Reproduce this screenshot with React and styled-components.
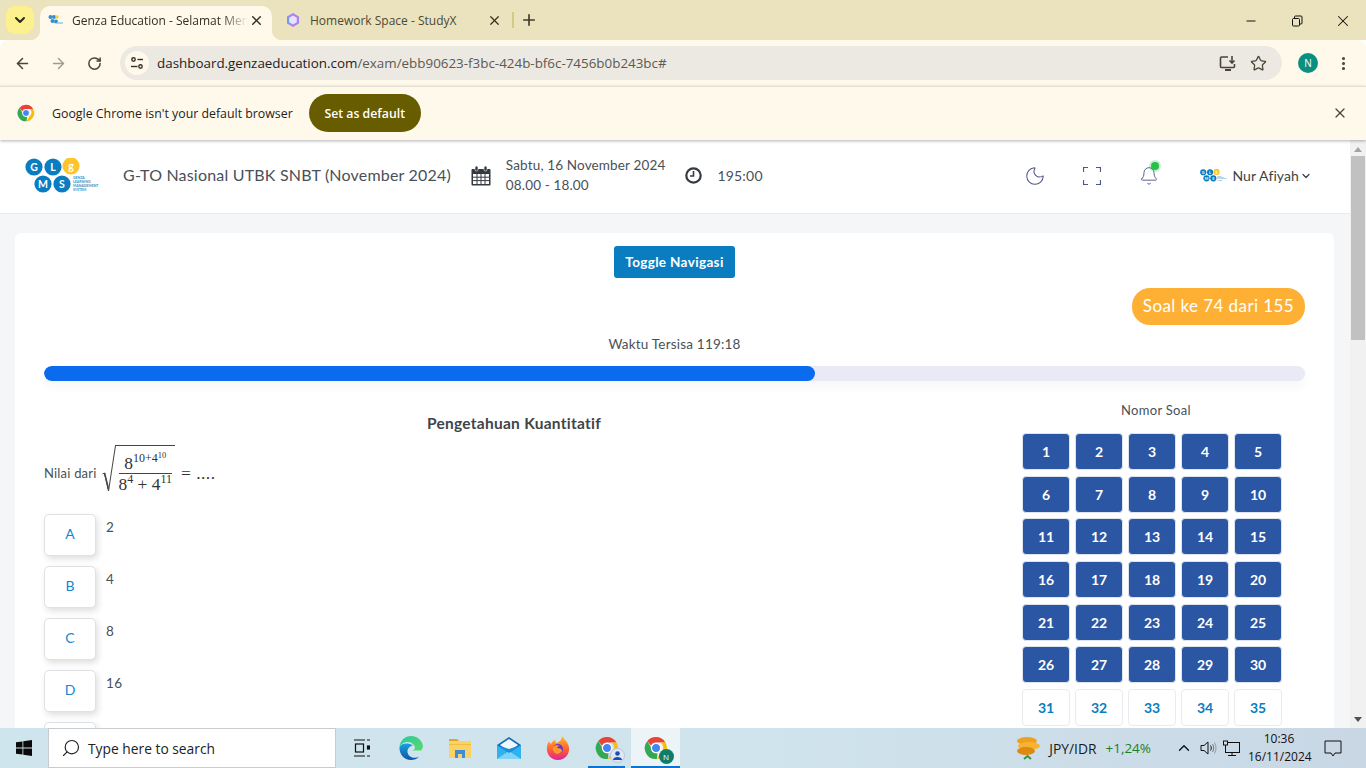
import React from "react";
import styled, { createGlobalStyle } from "styled-components";
import { ArrowLeft, ArrowRight, RotateCw, Star, X, Plus, Minus, ChevronDown, ChevronUp, EllipsisVertical, Moon, Bell, Search } from "lucide-react";

const Global = createGlobalStyle`
  html, body { margin: 0; padding: 0; height: 100%; overflow: hidden; background: #fff; }
  #root { height: 768px; }
  * { box-sizing: border-box; }
`;
const UI = `"Open Sans", "Noto Sans", sans-serif`;
const PAGE = `Lato, "Noto Sans", sans-serif`;

const Shell = styled.div`display:flex;flex-direction:column;width:1366px;height:768px;overflow:hidden;font-family:${UI};`;

/* browser chrome */
const TabStrip = styled.div`height:40px;background:#ebe3bd;display:flex;align-items:flex-end;padding-left:6px;position:relative;flex:none;`;
const TabMenu = styled.button`width:28px;height:28px;border:0;padding:0;margin:0 6px 6px 0;border-radius:9px;background:#fdf08f;display:flex;align-items:center;justify-content:center;color:#2a2a1a;`;
const ActiveTab = styled.div`width:232px;height:34px;background:#fff9ec;border-radius:10px 10px 0 0;display:flex;align-items:center;padding:0 8px 6px 8px;font-size:12px;color:#30301f;position:relative;
  &::before,&::after{content:"";position:absolute;bottom:0;width:10px;height:10px;background:radial-gradient(circle at var(--c) 0,#ebe3bd 10px,#fff9ec 10.5px);}
  &::before{left:-10px;--c:0;}
  &::after{right:-10px;--c:100%;}`;
const TabIcon = styled.span`width:16px;height:16px;flex:none;margin-right:8px;display:flex;align-items:center;justify-content:center;`;
const TabTitle = styled.span`flex:1;white-space:nowrap;overflow:hidden;font-size:12px;${p => !p.$full && "-webkit-mask-image:linear-gradient(90deg,#000 85%,transparent);mask-image:linear-gradient(90deg,#000 85%,transparent);"}${p => p.$full && "margin-left:1px;"}`;
const InactiveTab = styled(ActiveTab)`background:transparent;width:238px;padding-left:13px;color:#4b4936;&::before,&::after{display:none;}`;
const TabClose = styled.span`display:flex;width:16px;height:16px;align-items:center;justify-content:center;color:#33331f;flex:none;`;
const TabDivider = styled.span`width:2px;height:16px;background:#d6c984;margin:0 0 12px 2px;flex:none;`;
const NewTab = styled.span`display:flex;margin:0 0 11px 6px;color:#3f3c2a;`;
const WindowControls = styled.div`margin-left:auto;display:flex;height:40px;align-self:flex-start;align-items:center;color:#111;`;
const WindowButton = styled.span`width:46px;height:40px;display:flex;align-items:center;justify-content:center;padding-top:1px;`;

const Toolbar = styled.div`height:46px;flex:none;background:#fff9ec;border-radius:8px 8px 0 0;display:flex;align-items:center;padding:0 10px 0 10px;color:#4a4637;`;
const NavButton = styled.span`width:24px;height:24px;margin-right:12px;display:flex;align-items:center;justify-content:center;color:${p => p.$dim ? "#a09c8a" : "#4a4637"};`;
const Omnibox = styled.div`width:1162px;height:34px;margin-left:2px;border-radius:17px;background:#ece9e2;display:flex;align-items:center;padding:0 15px 0 5px;`;
const SiteInfo = styled.span`width:24px;height:24px;border-radius:50%;background:#fff9ec;display:flex;align-items:center;justify-content:center;margin-right:8px;`;
const Url = styled.span`font-size:13.4px;color:#5c5a52;flex:1;white-space:nowrap;b{font-weight:400;color:#23221c;}`;
const OmniIcon = styled.span`display:flex;margin-left:13px;color:#4a4637;`;
const Avatar = styled.span`width:20px;height:20px;border-radius:50%;background:#0b8f7f;color:#fff;font-size:10px;display:flex;align-items:center;justify-content:center;margin-left:16px;flex:none;`;
const BadgeAvatar = styled(Avatar)`position:absolute;right:-6px;bottom:-4px;width:15px;height:15px;margin:0;font-size:8px;background:#0d7d6c;`;
const Kebab = styled.span`display:flex;margin-left:17px;color:#4a4637;`;

const Infobar = styled.div`height:54px;flex:none;background:#fff9ec;border-top:1px solid #e6e0d2;display:flex;align-items:center;padding:0 17px 1px;position:relative;z-index:2;box-shadow:0 1px 3px rgba(0,0,0,.3);`;
const InfoText = styled.span`font-size:12.35px;color:#23221c;margin-left:17px;`;
const SetDefault = styled.button`height:38px;width:112px;margin-left:16px;border:0;border-radius:19px;background:#675c00;color:#fff;font:600 12.3px ${UI};`;
const InfoClose = styled.span`margin-left:auto;display:flex;color:#4a4637;margin-right:1px;`;

/* page */
const Viewport = styled.div`flex:1;min-height:0;display:flex;`;
const Page = styled.div`width:1350px;overflow:hidden;background:#f5f6f8;font-family:${PAGE};color:#495057;`;
const Header = styled.header`height:74px;background:#fff;border-bottom:1px solid #e9ebef;display:flex;align-items:center;padding:0 0 2px 25px;`;
const Title = styled.div`font-size:16px;margin-left:22px;padding-bottom:2px;color:#495057;letter-spacing:.19px;white-space:nowrap;`;
const IconSlot = styled.span`display:flex;margin-left:${p => p.$ml || 0}px;color:#343a40;`;
const DateBox = styled.div`margin-left:15px;padding-bottom:2px;font-size:13.5px;line-height:20px;letter-spacing:.15px;white-space:nowrap;`;
const Duration = styled.span`font-size:14px;margin-left:15px;letter-spacing:.2px;`;
const HeaderRight = styled.div`margin-left:auto;display:flex;align-items:center;color:#4f5586;padding-right:38px;`;
const HeaderIcon = styled.span`display:flex;width:22px;justify-content:center;margin-right:${p => p.$mr ?? 35}px;position:relative;`;
const Dot = styled.span`position:absolute;top:-4px;right:1px;width:8px;height:8px;border-radius:50%;background:#25c14a;box-shadow:0 0 0 2px rgba(37,193,74,.25);`;
const UserName = styled.span`font-size:14px;color:#3d4247;margin-left:5px;letter-spacing:.1px;white-space:nowrap;`;
const UserChevron = styled.span`display:flex;color:#3d4247;margin-left:1px;`;

const Main = styled.main`padding:19px 16px 0 15px;`;
const Card = styled.section`background:#fff;border-radius:6px;padding:13px 29px 0 29px;height:900px;`;
const CenterRow = styled.div`display:flex;justify-content:center;`;
const ToggleNav = styled.button`width:121px;height:32px;border:0;border-radius:3px;background:#0a7dc1;color:#fff;font:700 13.5px ${PAGE};letter-spacing:.35px;padding:0;`;
const RightRow = styled.div`display:flex;justify-content:flex-end;margin-top:10px;`;
const Badge = styled.span`width:173px;height:37px;border-radius:18px;background:#fdb033;color:#fff;font-size:17px;letter-spacing:.42px;display:flex;align-items:center;justify-content:center;padding-bottom:2px;white-space:nowrap;`;
const Remaining = styled.div`text-align:center;font-size:13.5px;margin-top:10px;line-height:18px;letter-spacing:.2px;`;
const Track = styled.div`height:15px;margin-top:13px;border-radius:8px;background:#e9eaf5;box-shadow:0 6px 10px rgba(60,60,100,.04);overflow:hidden;`;
const Fill = styled.div`height:100%;background:#0b6bef;border-radius:8px;`;
const Columns = styled.div`display:flex;margin-top:20px;`;
const Left = styled.div`width:940px;flex:none;padding-top:12px;`;
const SectionTitle = styled.h2`margin:0;text-align:center;font:700 15.5px/20px ${PAGE};color:#40454a;letter-spacing:.27px;`;
const Question = styled.div`display:flex;align-items:center;font-size:13px;margin-top:5px;height:70px;letter-spacing:.2px;`;
const Formula = styled.span`display:inline-flex;align-items:center;font-family:"Liberation Serif",serif;color:#333;font-size:17.4px;letter-spacing:0;margin-left:5px;`;
const Radical = styled.span`display:inline-flex;align-items:flex-start;margin-bottom:8px;`;
const Frac = styled.span`display:inline-flex;flex-direction:column;align-items:center;border-top:1px solid #444;padding:0 0 0 2px;margin-left:-1px;`;
const FracInner = styled.span`display:inline-flex;flex-direction:column;align-items:center;margin:0 3px 0 2px;`;
const Num = styled.span`padding:7px 0 0;line-height:20px;border-bottom:1px solid #444;white-space:nowrap;width:100%;text-align:center;`;
const Den = styled.span`padding-top:1px;line-height:18px;white-space:nowrap;`;
const Sup = styled.sup`font-size:12px;line-height:0;vertical-align:7px;`;
const Sup2 = styled.sup`font-size:8.5px;line-height:0;vertical-align:4px;`;
const Equals = styled.span`margin:0 0 0 6px;white-space:nowrap;letter-spacing:.5px;`;
const Options = styled.div`display:flex;flex-direction:column;gap:10px;margin-top:6px;`;
const Option = styled.div`display:flex;align-items:flex-start;`;
const OptionKey = styled.button`width:52px;height:42px;flex:none;border:1px solid #dfe1e6;border-radius:5px;background:#fff;color:#1387cf;font:400 14px ${PAGE};box-shadow:2px 3px 6px rgba(0,0,0,.13);padding:0 0 3px;`;
const OptionText = styled.span`font-size:13.5px;margin:4px 0 0 10px;line-height:18px;color:#495057;letter-spacing:.3px;`;
const Right = styled.div`flex:none;width:267px;margin-left:35px;`;
const NavTitle = styled.div`text-align:center;font-size:13px;line-height:18px;letter-spacing:.3px;width:274px;`;
const QGrid = styled.div`display:grid;grid-template-columns:repeat(5,48px);column-gap:5px;row-gap:5.7px;margin-top:14px;margin-left:3px;`;
const QCell = styled.button`height:37px;padding:0;border-radius:4px;border:1px solid ${p => p.$done ? "#dde3ef" : "#e9ebef"};background:${p => p.$done ? "#2b56a3" : "#fff"};color:${p => p.$done ? "#fff" : "#0a7dc1"};font:700 14px ${PAGE};`;

/* scrollbar */
const Scrollbar = styled.div`width:16px;background:#f1f1f1;display:flex;flex-direction:column;align-items:center;justify-content:space-between;position:relative;`;
const Arrow = styled.span`width:0;height:0;margin:${p => p.$down ? "0 0 6px" : "7px 0 0"};border-left:4.5px solid transparent;border-right:4.5px solid transparent;${p => p.$down ? "border-top:5px solid #505050;" : "border-bottom:5px solid #a3a3a3;"}`;
const Thumb = styled.span`position:absolute;top:16px;left:1px;width:14px;height:184px;background:#c1c1c1;`;

/* taskbar */
const Taskbar = styled.footer`height:40px;flex:none;background:linear-gradient(90deg,#cfe5ee 0%,#cfe3ec 60%,#c9d7e5 100%);display:flex;align-items:center;color:#111;font-family:${UI};`;
const StartBtn = styled.span`width:48px;display:flex;justify-content:center;`;
const SearchBox = styled.div`width:288px;height:40px;background:#fff;border:1px solid #c6ccd0;display:flex;align-items:center;padding-left:12px;font-size:13.8px;color:#222;gap:7px;`;
const TaskIcon = styled.span`width:49px;height:40px;flex:none;display:flex;align-items:center;justify-content:center;position:relative;margin-left:${p => p.$ml || 0}px;background:${p => p.$active ? "#ecf4f8" : "transparent"};
  ${p => p.$running && `&::after{content:"";position:absolute;left:${p.$active ? 0 : "6px"};right:${p.$active ? 0 : "6px"};bottom:0;height:2px;background:#0a74d1;}`}`;
const TaskBadgeWrap = styled.span`position:relative;display:flex;`;
const PersonBadge = styled.svg`position:absolute;right:-6px;bottom:-3px;`;
const Tray = styled.div`margin-left:auto;display:flex;align-items:center;height:40px;font-size:12px;`;
const Pair = styled.span`margin-left:9px;font-size:13.8px;color:#1a1a1a;`;
const Change = styled.span`margin-left:9px;font-size:13.5px;color:#1a7f26;margin-right:24px;`;
const TrayIcon = styled.span`display:flex;margin-right:${p => p.$mr ?? 4}px;`;
const Clock = styled.div`width:62px;text-align:center;font-size:12px;line-height:18px;color:#111;margin-left:8px;white-space:nowrap;`;
const Notify = styled.span`display:flex;margin:0 0 0 14px;width:42px;`;

const ChromeLogo = ({ size = 18 }) => (
  <svg width={size} height={size} viewBox="0 0 24 24">
    <path d="M12 1a11 11 0 0 1 9.500 5.500H12a5.500 5.500 0 0 0-5 3.200L3.300 5A11 11 0 0 1 12 1z" fill="#ea4335" />
    <path d="M21.500 6.500A11 11 0 0 1 12.800 23l4-7a5.500 5.500 0 0 0-.6-9.500z" fill="#fbbc04" />
    <path d="M12.800 23A11 11 0 0 1 3.300 5L7.400 12a5.500 5.500 0 0 0 6.100 5.300z" fill="#34a853" />
    <circle cx="12" cy="12" r="4.600" fill="#4285f4" stroke="#fff" strokeWidth="1.200" />
  </svg>
);

const GlmsLogo = ({ scale = 1 }) => (
  <svg width={76 * scale} height={36 * scale} viewBox="0 0 76 36" style={{ flex: "none" }}>
    {[["G", 9, 9, "#0a7dc1"], ["L", 28, 9, "#0a7dc1"], ["g", 46, 8, "#fdc52c"], ["M", 18, 26, "#0a7dc1"], ["S", 37, 26, "#0a7dc1"]].map(([t, x, y, c]) => (
      <g key={t}>
        <circle cx={x} cy={y} r="8.600" fill={c} />
        <text x={x} y={y + 3.6} textAnchor="middle" fontSize="10.500" fontWeight="700" fontFamily="Lato,sans-serif" fill="#fff">{t}</text>
      </g>
    ))}
    <text fontSize="3.500" fontFamily="Lato,sans-serif" fill="#3b8fc7" fontWeight="700">
      <tspan x="48" y="21">GENZA</tspan><tspan x="48" y="25">LEARNING</tspan><tspan x="48" y="29">MANAGEMENT</tspan><tspan x="48" y="33">SYSTEM</tspan>
    </text>
  </svg>
);

const MiniFavicon = () => (
  <svg width="16" height="12" viewBox="0 0 16 12">
    <circle cx="2.500" cy="3" r="2" fill="#2f8fd0" /><circle cx="6" cy="3" r="2" fill="#2f8fd0" /><circle cx="9" cy="3" r="1.800" fill="#f5cf4a" />
    <circle cx="4.500" cy="7" r="2" fill="#2f8fd0" /><circle cx="8" cy="7.500" r="2" fill="#2f8fd0" /><path d="M9 8h6v2H9z" fill="#a8d4ee" />
  </svg>
);

const TOTAL = Array.from({ length: 155 }, (_, i) => i + 1);

export default function App() {
  return (
    <Shell>
      <Global />
      <TabStrip>
        <TabMenu><ChevronDown size={16} strokeWidth={3} /></TabMenu>
        <ActiveTab>
          <TabIcon><MiniFavicon /></TabIcon>
          <TabTitle>Genza Education - Selamat Menempuh</TabTitle>
          <TabClose><X size={15} strokeWidth={2.4} /></TabClose>
        </ActiveTab>
        <InactiveTab>
          <TabIcon>
            <svg width="16" height="16" viewBox="0 0 16 16">
              <path d="M8 1l6 3.400v7.200L8 15l-6-3.400V4.400z" fill="#a884f0" />
              <path d="M8 3.500l3.800 2.200v4.600L8 12.500l-3.800-2.200V5.700z" fill="#e9e3fb" />
              <path d="M2 4.400L4 5.700v4.600l-2 1.300z" fill="#5aa7ef" />
            </svg>
          </TabIcon>
          <TabTitle $full>Homework Space - StudyX</TabTitle>
          <TabClose><X size={15} strokeWidth={2} /></TabClose>
        </InactiveTab>
        <TabDivider />
        <NewTab><Plus size={18} strokeWidth={2.2} /></NewTab>
        <WindowControls>
          <WindowButton><Minus size={14} strokeWidth={1.7} /></WindowButton>
          <WindowButton>
            <svg width="12" height="12" viewBox="0 0 12 12" fill="none" stroke="#111">
              <rect x="1.500" y="3.500" width="7" height="7.500" rx="1" /><path d="M3.500 3.500V2a1 1 0 0 1 1-1h5.500a1 1 0 0 1 1 1v6a1 1 0 0 1-1 1H8.500" />
            </svg>
          </WindowButton>
          <WindowButton><X size={18} strokeWidth={1.4} /></WindowButton>
        </WindowControls>
      </TabStrip>

      <Toolbar>
        <NavButton><ArrowLeft size={17} strokeWidth={2.2} /></NavButton>
        <NavButton $dim><ArrowRight size={17} strokeWidth={2} /></NavButton>
        <NavButton><RotateCw size={15} strokeWidth={2.4} /></NavButton>
        <Omnibox>
          <SiteInfo>
            <svg width="14" height="14" viewBox="0 0 14 14" fill="none" stroke="#33312a" strokeWidth="1.400">
              <circle cx="3.500" cy="3.500" r="1.700" /><path d="M7.500 3.500H13" /><circle cx="10.500" cy="10.500" r="1.700" /><path d="M1 10.500h6.500" />
            </svg>
          </SiteInfo>
          <Url><b>dashboard.genzaeducation.com</b>/exam/ebb90623-f3bc-424b-bf6c-7456b0b243bc#</Url>
          <OmniIcon>
            <svg width="18" height="18" viewBox="0 0 18 18" fill="none" stroke="#4a4637" strokeWidth="1.600">
              <path d="M9 3H2.500a1 1 0 0 0-1 1v8.500a1 1 0 0 0 1 1h12a1 1 0 0 0 1-1V10" />
              <path d="M6 16h6" strokeWidth="2" /><path d="M13 2v7M10.500 6.500L13 9l2.500-2.500" />
            </svg>
          </OmniIcon>
          <OmniIcon><Star size={17} strokeWidth={1.8} /></OmniIcon>
        </Omnibox>
        <Avatar>N</Avatar>
        <Kebab><EllipsisVertical size={17} strokeWidth={2.4} /></Kebab>
      </Toolbar>

      <Infobar>
        <ChromeLogo size={18} />
        <InfoText>Google Chrome isn't your default browser</InfoText>
        <SetDefault>Set as default</SetDefault>
        <InfoClose><X size={16} strokeWidth={1.8} /></InfoClose>
      </Infobar>

      <Viewport>
        <Page>
          <Header>
            <GlmsLogo />
            <Title>G-TO Nasional UTBK SNBT (November 2024)</Title>
            <IconSlot $ml={20}>
              <svg width="20" height="21" viewBox="0 0 20 21">
                <path d="M1.500 4h17a1 1 0 0 1 1 1v14.500a1 1 0 0 1-1 1h-17a1 1 0 0 1-1-1V5a1 1 0 0 1 1-1z" fill="#343a40" />
                <rect x="2" y="9" width="16" height="10" fill="#fff" />
                <path d="M2 12.200h16M2 15.600h16M6 9v10M10 9v10M14 9v10" stroke="#343a40" strokeWidth="1" />
                <rect x="4" y="1" width="3" height="5" rx="1.500" fill="#343a40" stroke="#fff" strokeWidth=".6" />
                <rect x="13" y="1" width="3" height="5" rx="1.500" fill="#343a40" stroke="#fff" strokeWidth=".6" />
              </svg>
            </IconSlot>
            <DateBox>Sabtu, 16 November 2024<br />08.00 - 18.00</DateBox>
            <IconSlot $ml={20}>
              <svg width="17" height="17" viewBox="0 0 17 17" fill="none" stroke="#343a40">
                <circle cx="8.500" cy="8.500" r="7.200" strokeWidth="2.200" /><path d="M8.500 4v5H5" strokeWidth="1.600" />
              </svg>
            </IconSlot>
            <Duration>195:00</Duration>
            <HeaderRight>
              <HeaderIcon><Moon size={22} strokeWidth={1.1} /></HeaderIcon>
              <HeaderIcon>
                <svg width="18" height="18" viewBox="0 0 18 18" fill="none" stroke="#4f5586" strokeWidth="1.200">
                  <path d="M.5 5V.5H5M13 .5h4.500V5M17.500 13v4.500H13M5 17.500H.5V13" />
                </svg>
              </HeaderIcon>
              <HeaderIcon $mr={40}><Bell size={20} strokeWidth={1.1} /><Dot /></HeaderIcon>
              <GlmsLogo scale={0.36} />
              <UserName>Nur Afiyah</UserName>
              <UserChevron><ChevronDown size={12} strokeWidth={2.5} /></UserChevron>
            </HeaderRight>
          </Header>
          <Main>
            <Card>
              <CenterRow><ToggleNav>Toggle Navigasi</ToggleNav></CenterRow>
              <RightRow><Badge>Soal ke 74 dari 155</Badge></RightRow>
              <Remaining>Waktu Tersisa 119:18</Remaining>
              <Track><Fill style={{ width: `${(771 / 1261) * 100}%` }} /></Track>
              <Columns>
                <Left>
                  <SectionTitle>Pengetahuan Kuantitatif</SectionTitle>
                  <Question>
                    Nilai dari
                    <Formula>
                      <Radical>
                        <svg width="14" height="48" viewBox="0 0 14 48" fill="none" stroke="#444">
                          <path d="M0.500 29l2-1 4 18L13.500 .5" strokeWidth="1" /><path d="M2.500 28l4 16" strokeWidth="1.600" />
                        </svg>
                        <Frac>
                          <FracInner>
                            <Num>8<Sup>10+4<Sup2>10</Sup2></Sup></Num>
                            <Den>8<Sup>4</Sup> + 4<Sup>11</Sup></Den>
                          </FracInner>
                        </Frac>
                      </Radical>
                      <Equals>= ....</Equals>
                    </Formula>
                  </Question>
                  <Options>
                    {[["A", "2"], ["B", "4"], ["C", "8"], ["D", "16"], ["E", "32"]].map(([k, v]) => (
                      <Option key={k}><OptionKey>{k}</OptionKey><OptionText>{v}</OptionText></Option>
                    ))}
                  </Options>
                </Left>
                <Right>
                  <NavTitle>Nomor Soal</NavTitle>
                  <QGrid>
                    {TOTAL.map(n => <QCell key={n} $done={n <= 30}>{n}</QCell>)}
                  </QGrid>
                </Right>
              </Columns>
            </Card>
          </Main>
        </Page>
        <Scrollbar>
          <Arrow />
          <Thumb />
          <Arrow $down />
        </Scrollbar>
      </Viewport>

      <Taskbar>
        <StartBtn>
          <svg width="16" height="16" viewBox="0 0 16 16" fill="#0a0a0a"><path d="M0 2.300l6.500-.9v6.200H0zM7.300 1.300L16 0v7.600H7.300zM0 8.400h6.500v6.200L0 13.700zM7.300 8.400H16V16l-8.700-1.300z" /></svg>
        </StartBtn>
        <SearchBox><Search size={20} strokeWidth={1.4} style={{ transform: "scaleX(-1)" }} />Type here to search</SearchBox>
        <TaskIcon $ml={1}>
          <svg width="16" height="18" viewBox="0 0 16 18" fill="none" stroke="#111" strokeWidth="1.200">
            <path d="M0 1h11M0 17h11" /><rect x="1.500" y="5" width="8" height="8" /><path d="M13 1h3M13 17h3" /><rect x="13.500" y="7" width="2" height="3" fill="#111" />
          </svg>
        </TaskIcon>
        <TaskIcon>
          <svg width="24" height="24" viewBox="0 0 24 24">
            <defs>
              <linearGradient id="ed1" x1="0" y1="0" x2="1" y2="1"><stop offset="0" stopColor="#2fc7a0" /><stop offset="1" stopColor="#56dc6a" /></linearGradient>
              <linearGradient id="ed2" x1="0" y1="0" x2="0" y2="1"><stop offset="0" stopColor="#1b9de2" /><stop offset="1" stopColor="#0c59a4" /></linearGradient>
            </defs>
            <path d="M12 0C6 0 1 4.500.5 11c3-6 12-7 15-1 1.500 3-1 4.500-3 4.500h9.800C23.500 12 24 11 24 10 23 4 18 0 12 0z" fill="url(#ed1)" />
            <path d="M.5 11C0 18 5 24 12 24c3 0 6-1 8-3-5 2-11 0-11.500-5-.3-3 2-6 5.500-6.500C9 6.500 3 7 .5 11z" fill="url(#ed2)" />
          </svg>
        </TaskIcon>
        <TaskIcon>
          <svg width="22" height="20" viewBox="0 0 22 20">
            <path d="M0 1h8l2 2H0z" fill="#e0a526" /><rect y="3" width="22" height="17" fill="#fcd265" /><rect y="6" width="22" height="1" fill="#f1bd43" />
            <path d="M6 12h10v8h-3v-4H9v4H6z" fill="#3c8ed8" />
          </svg>
        </TaskIcon>
        <TaskIcon>
          <svg width="24" height="22" viewBox="0 0 24 22">
            <path d="M12 0l12 8v14H0V8z" fill="#0f6cbd" /><path d="M0 8l12 8 12-8v14H0z" fill="#2fb2ee" /><path d="M0 22l12-8 12 8z" fill="#7fd3f7" /><path d="M3 8l9-6 9 6-9 6z" fill="#fff" opacity=".95" /><path d="M0 8l12 8 12-8-12 4z" fill="#1d8fd8" />
          </svg>
        </TaskIcon>
        <TaskIcon>
          <svg width="24" height="24" viewBox="0 0 24 24">
            <defs><linearGradient id="fx" x1="0" y1="0" x2="0" y2="1"><stop offset="0" stopColor="#ffbd30" /><stop offset=".6" stopColor="#ff5a35" /><stop offset="1" stopColor="#e0219c" /></linearGradient></defs>
            <path d="M16 0c2 3 6 6 7 11 1 7-4 13-11 13S0 18 1 11c0-2 1-4 2-6 0 1 1 2 2 3 1-2 3-4 5-4-1 1-1 2 0 3 3-1 6-3 6-7z" fill="url(#fx)" />
            <circle cx="12" cy="13" r="5" fill="#6b35c9" /><path d="M7 11c2-2 5-2 7-1-2 0-3 1-3 2 3 0 5 1 5 3-1 2-3 3-5 3-3-1-5-4-4-7z" fill="#ff9a2a" />
          </svg>
        </TaskIcon>
        <TaskIcon $running>
          <TaskBadgeWrap>
            <ChromeLogo size={24} />
            <PersonBadge width="15" height="15" viewBox="0 0 15 15">
              <circle cx="7.500" cy="7.500" r="7" fill="#dfe7f8" stroke="#b9c4dd" />
              <circle cx="7.500" cy="5.500" r="2.300" fill="#1b4fa8" /><path d="M3 12c0-4 9-4 9 0z" fill="#1b4fa8" />
            </PersonBadge>
          </TaskBadgeWrap>
        </TaskIcon>
        <TaskIcon $running $active>
          <TaskBadgeWrap>
            <ChromeLogo size={24} />
            <BadgeAvatar>N</BadgeAvatar>
          </TaskBadgeWrap>
        </TaskIcon>
        <Tray>
          <svg width="24" height="24" viewBox="0 0 24 24">
            <ellipse cx="11" cy="5" rx="10" ry="4" fill="#f0a020" /><ellipse cx="13" cy="10" rx="11" ry="4" fill="#f5b330" /><ellipse cx="10" cy="15" rx="9" ry="4" fill="#dd8a12" />
            <path d="M8 23l3.500-3 3.500 3" fill="none" stroke="#2f9a3d" strokeWidth="2" />
          </svg>
          <Pair>JPY/IDR</Pair>
          <Change>+1,24%</Change>
          <TrayIcon $mr={7}><ChevronUp size={18} strokeWidth={1.8} /></TrayIcon>
          <TrayIcon $mr={6}>
            <svg width="17" height="16" viewBox="0 0 17 16" fill="none" stroke="#111">
              <path d="M1 5.500h3l4-3.500v12l-4-3.500H1z" /><path d="M10.500 5.500c1 1.500 1 3.500 0 5" /><path d="M12.500 4c1.600 2.500 1.600 5.500 0 8" stroke="#777" /><path d="M14.500 2.500c2 3.500 2 7.500 0 11" stroke="#999" />
            </svg>
          </TrayIcon>
          <TrayIcon $mr={0}>
            <svg width="17" height="17" viewBox="0 0 17 17" fill="none" stroke="#111">
              <rect x="2.500" y="2.500" width="14" height="10" /><path d="M9 12.500V15M5 15.500h8" /><rect x=".5" y="1" width="4" height="4" fill="#cfdbe6" />
            </svg>
          </TrayIcon>
          <Clock>10:36<br />16/11/2024</Clock>
          <Notify>
            <svg width="18" height="17" viewBox="0 0 18 17" fill="none" stroke="#111"><path d="M1 1h16v12H11l-2 3-2-3H1z" /></svg>
          </Notify>
        </Tray>
      </Taskbar>
    </Shell>
  );
}
